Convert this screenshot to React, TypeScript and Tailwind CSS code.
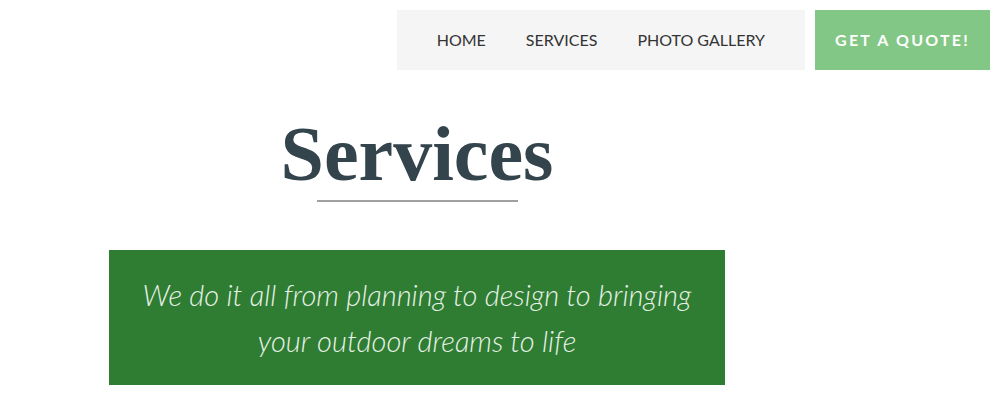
export default function App() {
  return (
    <div className="w-[1000px] h-[400px] bg-white overflow-hidden" style={{ fontFamily: "Lato, 'Noto Sans', sans-serif" }}>
      <div className="flex justify-end items-stretch gap-[10px] pt-[10px] pr-[10px]">
        <nav className="flex items-center h-[60px] bg-[#f5f5f5] px-[20px]">
          {["HOME", "SERVICES", "PHOTO GALLERY"].map((t) => (
            <a key={t} className="px-[20px] text-[16px] text-[#333333] leading-none">{t}</a>
          ))}
        </nav>
        <a className="flex items-center justify-center w-[175px] h-[60px] bg-[#82c785] text-white font-bold text-[16px] tracking-[2.2px]">GET A QUOTE!</a>
      </div>
      <div className="w-[834px] flex flex-col items-center">
        <h1 className="mt-[40px] text-[#34444c] font-bold text-[78px] leading-[88px]" style={{ fontFamily: "'Liberation Serif', 'DejaVu Serif', serif" }}>Services</h1>
        <div className="mt-[2px] w-[201px] h-[2px] bg-[#a0a0a0]" />
        <div className="mt-[48px] w-[616px] h-[135px] bg-[#2f7d32] flex items-center justify-center text-center">
          <p className="text-[#e8f1e8] italic font-light text-[29px] leading-[46px] px-[20px]">
            We do it all from planning to design to bringing your outdoor dreams to life
          </p>
        </div>
      </div>
    </div>
  );
}
